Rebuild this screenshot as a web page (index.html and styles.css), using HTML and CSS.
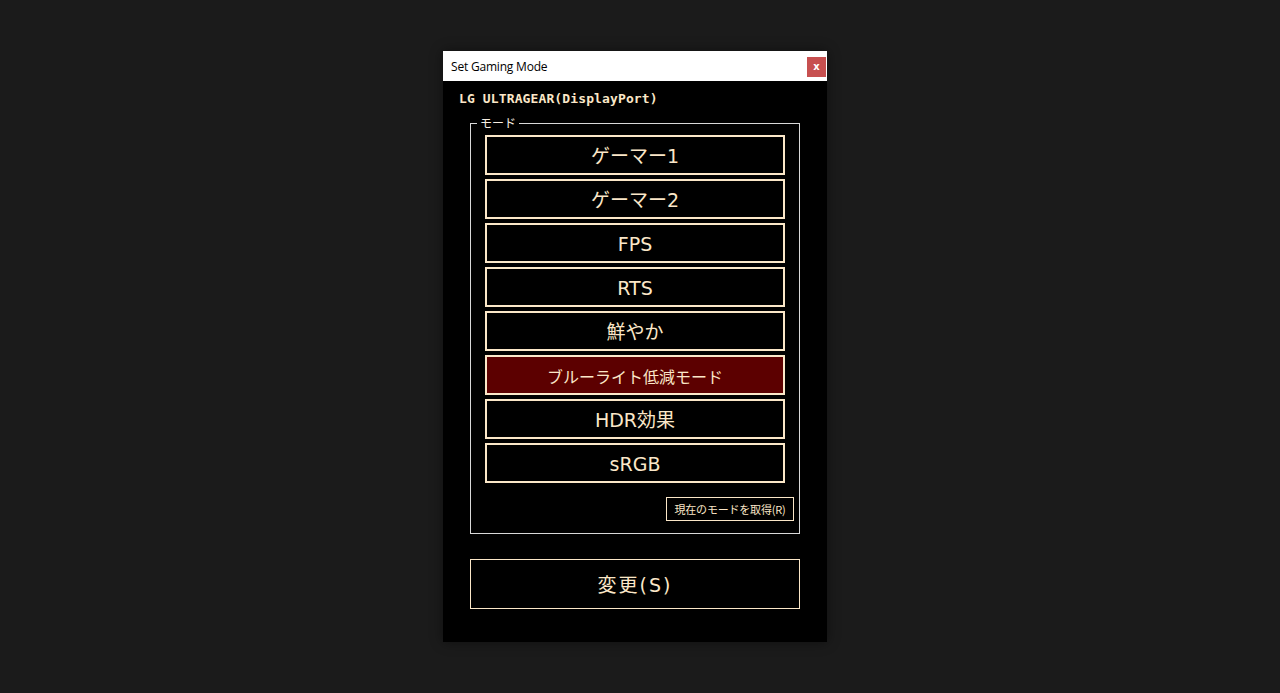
FILE: index.html
```html
<!DOCTYPE html>
<html lang="ja">
<head>
<meta charset="utf-8">
<title>Set Gaming Mode</title>
<link rel="stylesheet" href="styles.css">
</head>
<body>
<div class="stage">
  <div class="window">
    <div class="titlebar">
      <span class="title">Set Gaming Mode</span>
      <button class="close">x</button>
    </div>
    <div class="content">
      <div class="device">LG ULTRAGEAR(DisplayPort)</div>
      <div class="group">
        <span class="legend">モード</span>
        <div class="modes">
          <button class="mode">ゲーマー1</button>
          <button class="mode">ゲーマー2</button>
          <button class="mode">FPS</button>
          <button class="mode">RTS</button>
          <button class="mode">鮮やか</button>
          <button class="mode mode-active">ブルーライト低減モード</button>
          <button class="mode">HDR効果</button>
          <button class="mode">sRGB</button>
        </div>
        <div class="refresh-row">
          <button class="refresh">現在のモードを取得(R)</button>
        </div>
      </div>
      <button class="apply">変更(S)</button>
    </div>
  </div>
</div>
</body>
</html>
```

FILE: styles.css
```css
html, body {
  margin: 0;
  padding: 0;
  background: #1b1b1b;
  height: 100%;
}

.stage {
  padding: 51px 0 0 443px;
}

.window {
  width: 384px;
  height: 591px;
  display: flex;
  flex-direction: column;
  background: #000;
  box-shadow: 0 0 12px rgba(0, 0, 0, 0.45);
}

.titlebar {
  height: 30px;
  background: #fff;
  display: flex;
  align-items: center;
  justify-content: space-between;
  padding: 0 1px 0 8px;
  box-sizing: border-box;
}

.title {
  font-family: "Open Sans", "Noto Sans", sans-serif;
  font-size: 12px;
  color: #000;
  letter-spacing: -0.2px;
}

.close {
  width: 19px;
  height: 20px;
  margin-top: 2px;
  border: none;
  padding: 0;
  background: #c75050;
  color: #fff;
  font-family: "DejaVu Sans", sans-serif;
  font-weight: bold;
  font-size: 10px;
  line-height: 20px;
}

.content {
  flex: 1;
  padding: 10px 27px 0 27px;
  display: flex;
  flex-direction: column;
}

.device {
  font-family: "DejaVu Sans Mono", monospace;
  font-weight: bold;
  font-size: 13px;
  line-height: 16px;
  color: #fbe7c8;
  margin-left: -11px;
  letter-spacing: 0.12px;
}

.group {
  position: relative;
  margin-top: 16px;
  height: 411px;
  box-sizing: border-box;
  border: 1px solid #d8d8d8;
  padding: 11px 5px 0 14px;
  display: flex;
  flex-direction: column;
}

.legend {
  position: absolute;
  top: -8px;
  left: 6px;
  padding: 0 3px;
  background: #000;
  color: #f7eee2;
  font-family: "Noto Sans CJK JP", sans-serif;
  font-size: 12px;
  line-height: 14px;
}

.modes {
  display: flex;
  flex-direction: column;
  gap: 4px;
}

.mode {
  width: 300px;
  height: 40px;
  box-sizing: border-box;
  border: 2px solid #fbe7c8;
  background: #000;
  color: #fbe7c8;
  font-family: "DejaVu Sans", "Noto Sans CJK JP", sans-serif;
  font-size: 19px;
  padding: 2px 0 0 0;
  line-height: 34px;
}

.mode-active {
  background: #5c0000;
  font-family: "Noto Sans CJK JP", sans-serif;
  font-size: 16px;
}

.refresh-row {
  display: flex;
  justify-content: flex-end;
  margin-top: 14px;
}

.refresh {
  height: 24px;
  width: 128px;
  box-sizing: border-box;
  border: 1px solid #fbe7c8;
  background: #000;
  color: #fbe7c8;
  font-family: "Noto Sans CJK JP", sans-serif;
  font-size: 11px;
  padding: 0;
  line-height: 22px;
  letter-spacing: -0.2px;
}

.apply {
  margin-top: 25px;
  height: 50px;
  width: 330px;
  box-sizing: border-box;
  border: 1px solid #fbe7c8;
  background: #000;
  color: #fbe7c8;
  font-family: "DejaVu Sans", "Noto Sans CJK JP", sans-serif;
  font-size: 19px;
  padding: 0 0 2px 0;
  letter-spacing: 2px;
}
```
